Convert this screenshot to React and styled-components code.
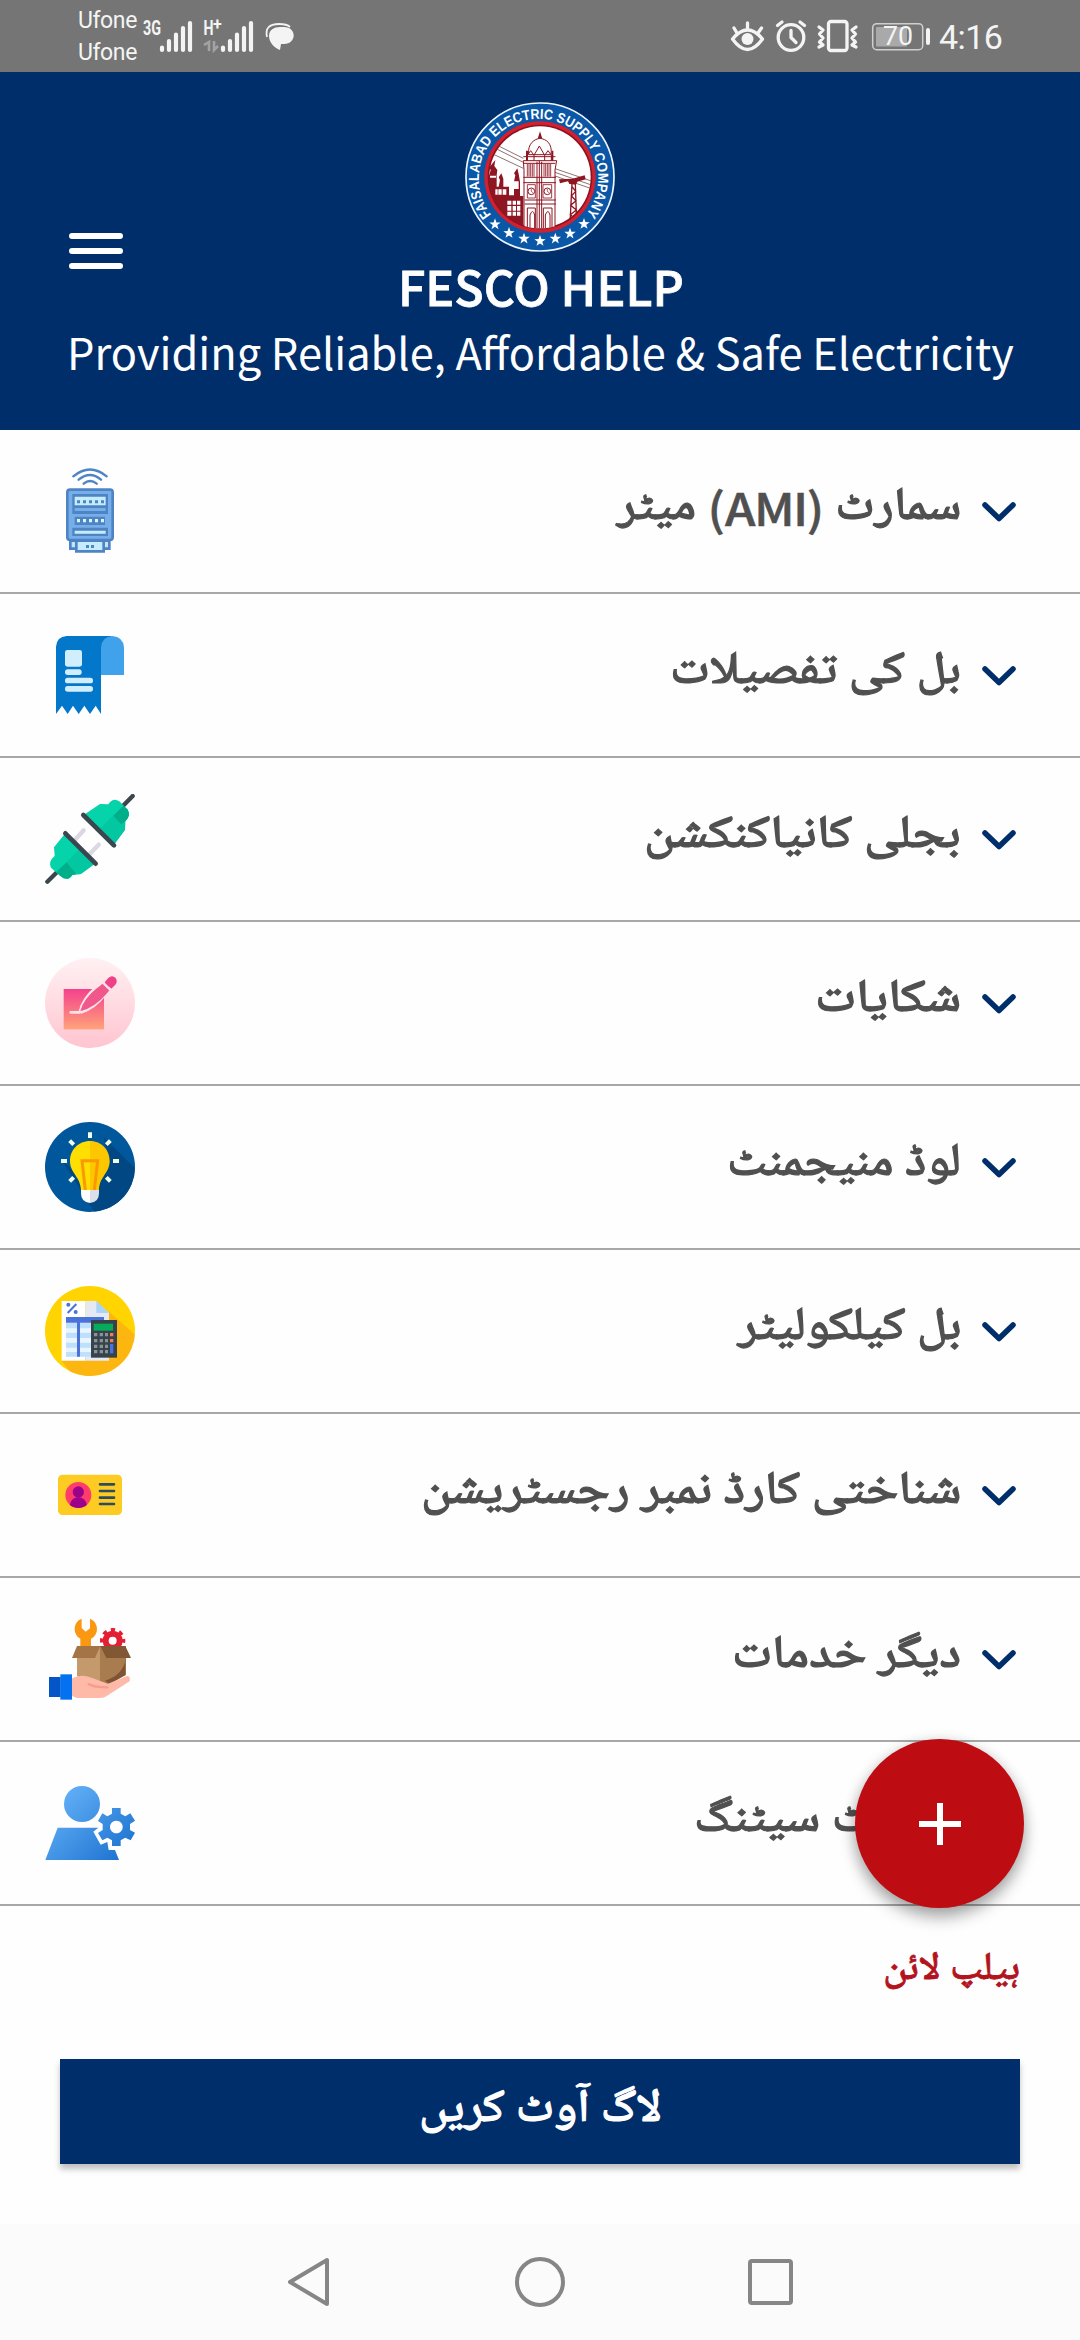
import { useLayoutEffect, useRef, useState } from 'react';
import styled, { createGlobalStyle } from 'styled-components';

const GlobalStyle = createGlobalStyle`
 * {
   box-sizing: border-box;
 }

 body {
   margin: 0;
   background: #fefefe;
   font-family: "Noto Sans CJK SC", "Noto Naskh Arabic", "Noto Sans Arabic", "DejaVu Sans", sans-serif;
 }
`;

const Screen = styled.div`
 position: relative;
 display: flex;
 flex-direction: column;
 width: 1080px;
 height: 2340px;
 overflow: hidden;
 background: #fefefe;
`;

const StatusBar = styled.div`
 display: flex;
 justify-content: space-between;
 height: 72px;
 padding: 0 75px 0 78px;
 background: #757575;
 color: #f4f4f4;
 font-family: Roboto, sans-serif;
`;

const StatusGroup = styled.div`
 display: flex;
 align-items: center;
`;

const Carriers = styled.div`
 width: 64px;
 font-size: 23px;
 line-height: 32px;
 padding-top: 2px;
 letter-spacing: -0.4px;
`;

const Clock = styled.span`
 width: 66px;
 padding-top: 2px;
 font-size: 34px;
 line-height: 40px;
 letter-spacing: -0.6px;
`;

const Header = styled.header`
 display: grid;
 grid-template-columns: 54px 1fr 54px;
 align-content: start;
 height: 358px;
 padding: 30px 69px 0;
 background: #002e6a;
 color: #fff;
`;

const MenuButton = styled.div`
 display: flex;
 flex-direction: column;
 gap: 9px;
 align-self: end;
 margin-bottom: 46px;

 span {
   height: 6px;
   border-radius: 3px;
   background: #fff;
 }
`;

const Brand = styled.div`
 display: flex;
 flex-direction: column;
 align-items: center;
 gap: 3px;

 h1 {
   margin: 0 0 0 2px;
   font-size: 48px;
   font-weight: 500;
   line-height: 60px;
   -webkit-text-stroke: 0.8px currentColor;
 }
`;

const Tagline = styled.p`
 grid-column: 1 / -1;
 display: flex;
 justify-content: center;
 margin: 6px 0 0;
 font-size: 44px;
 line-height: 60px;
`;

const Row = styled.div`
 display: flex;
 align-items: center;
 justify-content: space-between;
 height: 164px;
 padding: 0 63px 0 45px;
 border-bottom: 2px solid #a8a8a8;
`;

const RowEnd = styled.div`
 display: flex;
 align-items: center;
 gap: 20px;
`;

const Label = styled.div`
 direction: rtl;
 color: #505050;
 font-size: 46px;
 font-weight: 500;
 line-height: 60px;
 padding-bottom: 25px;
 -webkit-text-stroke: 1.2px currentColor;
`;

/* Latin abbreviations sit lower than the Urdu baseline */
const Latin = styled.bdi`
 font-size: 45px;
 line-height: 0;
 letter-spacing: -1.4px;
 vertical-align: -7px;
 -webkit-text-stroke: 0.5px currentColor;
`;

const Fitted = styled.span`
 display: inline-block;
 white-space: nowrap;
 transform-origin: ${(props) => props.$origin};
`;

const Helpline = styled.div`
 display: flex;
 direction: rtl;
 height: 153px;
 padding: 31px 60px 0;
 color: #b3131d;
 font-size: 39px;
 font-weight: 500;
 line-height: 50px;
 -webkit-text-stroke: 0.8px currentColor;
`;

const LogoutButton = styled.div`
 display: flex;
 direction: rtl;
 justify-content: center;
 height: 105px;
 margin: 0 60px;
 padding-top: 12px;
 background: #002e6a;
 box-shadow: 0 5px 6px rgba(0, 0, 0, 0.25);
 color: #fff;
 font-size: 46px;
 font-weight: 500;
 line-height: 60px;
 -webkit-text-stroke: 1.2px currentColor;
`;

const Fab = styled.div`
 position: absolute;
 left: 855px;
 top: 1739px;
 display: flex;
 align-items: center;
 justify-content: center;
 width: 169px;
 height: 169px;
 border-radius: 50%;
 background: #be0d12;
 box-shadow: 0 10px 16px rgba(0, 0, 0, 0.28), 0 2px 14px rgba(0, 0, 0, 0.16);
`;

const NavBar = styled.div`
 display: flex;
 justify-content: center;
 gap: 180px;
 height: 116px;
 margin-top: auto;
 padding-top: 32px;
 background: #fbfbfb;
`;

// Squeezes or widens a line of text so that it takes exactly `width` pixels.
const FitText = ({ width, origin = 'right center', children }) => {
  const ref = useRef(null);
  const [scale, setScale] = useState(1);

  useLayoutEffect(() => {
    setScale(width / ref.current.offsetWidth);
  }, [width]);

  return (
    <Fitted ref={ref} $origin={origin} style={{ transform: `scaleX(${scale})` }}>
      {children}
    </Fitted>
  );
};

const starPoints = (cx, cy, r) =>
  Array.from({ length: 10 }, (_, i) => {
    const radius = i % 2 ? r * 0.4 : r;
    const angle = (Math.PI / 5) * i - Math.PI / 2;
    return `${cx + radius * Math.cos(angle)},${cy + radius * Math.sin(angle)}`;
  }).join(' ');

const STARS = [[165, 403], [207, 429], [252, 446], [300, 453], [346, 446], [390, 431], [432, 402]];

const Logo = () => (
  <svg width="150" height="150" viewBox="75 36 450 450">
    <defs>
      <path id="ring" d="M154 375 A179 179 0 1 1 426 388" />
      <clipPath id="inner"><circle cx="300" cy="261" r="154" /></clipPath>
    </defs>
    <circle cx="300" cy="261" r="222" fill="#0a57a8" stroke="#eef5fb" strokeWidth="5" />
    <circle cx="300" cy="261" r="167" fill="#d3202f" />
    <circle cx="300" cy="261" r="157" fill="#8d1220" />
    <circle cx="300" cy="261" r="152" fill="#fff" />
    <g clipPath="url(#inner)">
      <g fill="none" stroke="#7b5557" strokeWidth="2.5">
        <path d="M160 160 L250 205 M160 172 L250 217 M150 188 L250 235 M345 236 L460 275 M345 247 L460 287 M345 258 L460 298" />
      </g>
      <path fill="#8e1522" d="M130 256 H148 V256 L152 240 L148 232 L166 210 L163 228 L172 240 L170 256 V290 H176 L180 270 L176 262 L184 250 L190 266 L190 290 H207 V316 H222 V275 L226 256 L222 250 L232 235 L236 252 L240 275 V318 H250 V420 H130 Z" />
      <path fill="#fff" d="M150 257 H168 V263 H150 Z M222 274 H236 V297 H222 Z M175 298 H185 V314 H175 Z M188 298 H199 V314 H188 Z M166 298 H173 V314 H166 Z M202 332 H214 V344 H202 Z M218 332 H228 V344 H218 Z M231 332 H241 V344 H231 Z M202 348 H214 V362 H202 Z M218 348 H228 V362 H218 Z M231 348 H241 V362 H231 Z M202 365 H214 V377 H202 Z M218 365 H228 V377 H218 Z M231 365 H241 V377 H231 Z" />
      <path fill="#fff" stroke="#8e1522" strokeWidth="3" d="M250 212 H350 L345 240 V425 H252 V240 Z" />
      <path fill="#8e1522" d="M293 146 L300 124 L307 146 Z M258 182 H264 V212 H258 Z M334 182 H340 V212 H334 Z" />
      <path fill="#fff" stroke="#8e1522" strokeWidth="3" d="M266 194 C262 160 284 147 300 145 C318 147 338 160 333 194 Z" />
      <path fill="none" stroke="#8e1522" strokeWidth="3" d="M262 212 V196 L272 182 L282 196 L298 168 L314 196 L324 182 L334 196 V212 M282 196 V212 M314 196 V212 M250 200 H346 M250 220 H346 M250 262 H348 M250 278 H348 M254 330 H348 M254 342 H348 M298 212 V420 M291 215 V420 M305 215 V420" />
      <path fill="none" stroke="#8e1522" strokeWidth="2.5" d="M262 222 V260 M267 222 V260 M272 222 V260 M277 222 V260 M282 222 V260 M312 222 V260 M317 222 V260 M322 222 V260 M327 222 V260 M332 222 V260 M262 284 H286 V324 H262 Z M309 284 H335 V324 H309 Z" />
      <path fill="none" stroke="#8e1522" strokeWidth="3" d="M262 420 V354 H286 V420 M310 420 V354 H336 V420 M270 420 V375 Q278 354 284 375 V420 M316 420 V375 Q324 354 330 375 V420" />
      <g fill="#fff" stroke="#8e1522" strokeWidth="3">
        <circle cx="274" cy="304" r="10" />
        <circle cx="322" cy="304" r="10" />
      </g>
      <path fill="none" stroke="#8e1522" strokeWidth="2" d="M274 297 V304 L279 308 M322 297 V304 L327 308" />
      <path fill="#8e1522" d="M357 268 L398 266 L434 256 L437 268 L412 275 L408 284 L388 282 L384 274 L360 280 Z" />
      <path fill="none" stroke="#8e1522" strokeWidth="4" d="M396 280 L390 400 M406 280 L410 400 M396 290 L407 304 L394 318 L408 332 L392 346 L409 360 L391 374 L410 390" />
    </g>
    <text fill="#fff" fontFamily="Liberation Sans Narrow, Liberation Sans, sans-serif" fontSize="43" fontWeight="700" textLength="796" lengthAdjust="spacingAndGlyphs">
      <textPath href="#ring" textLength="796" lengthAdjust="spacingAndGlyphs">FAISALABAD ELECTRIC SUPPLY COMPANY</textPath>
    </text>
    {STARS.map(([x, y]) => (
      <polygon key={x} points={starPoints(x, y, 18)} fill="#fff" />
    ))}
  </svg>
);

const MeterIcon = () => (
  <svg width="90" height="90" viewBox="45 48 270 270">
    <g fill="none" stroke="#4f84c4" strokeWidth="7" strokeLinecap="round">
      <path d="M130 79 Q180 38 230 79 M146 89 Q180 61 213 89 M161 101 Q180 85 200 101" />
    </g>
    <path d="M121 272 H238 V296 H121 Z" fill="#bfe6fb" stroke="#4f84c4" strokeWidth="8" />
    <path d="M139 272 H221 V304 H139 Z" fill="#c4ecfd" stroke="#4f84c4" strokeWidth="8" />
    <rect x="112" y="119" width="136" height="151" rx="8" fill="#76aeea" stroke="#4f84c4" strokeWidth="8" />
    <path fill="#4f84c4" d="M127 132 H234 V192 H127 Z M134 200 H225 V225 H134 Z M127 233 H234 V258 H127 Z M168 285 H177 V294 H168 Z M183 285 H192 V294 H183 Z" />
    <path fill="#c4ecfd" d="M134 140 H227 V166 H134 Z M134 242 H227 V251 H134 Z" />
    <path fill="#76aeea" d="M134 174 H227 V183 H134 Z" />
    <path stroke="#4f84c4" strokeWidth="9" strokeDasharray="9 9" d="M141 155 H222" />
    <path stroke="#d8f4ff" strokeWidth="10" strokeDasharray="9 9" d="M141 212 H222" />
  </svg>
);

const BillIcon = () => (
  <svg width="90" height="90" viewBox="45 540 270 270">
    <path fill="#0377ca" d="M78 590 Q80 560 110 558 H245 L213 600 V792 L197 767 L180 792 L163 767 L146 792 L129 767 L113 792 L96 767 L78 792 Z" />
    <path fill="#41a2ec" d="M213 675 V592 Q216 560 247 558 Q279 560 282 592 V675 Z" />
    <g fill="#d1eefc">
      <rect x="105" y="600" width="51" height="50" rx="7" />
      <rect x="105" y="658" width="50" height="17" rx="8" />
      <rect x="105" y="683" width="84" height="17" rx="8" />
      <rect x="105" y="708" width="84" height="17" rx="8" />
    </g>
  </svg>
);

const PlugIcon = () => (
  <svg width="90" height="90" viewBox="45 42 270 270">
    <g strokeLinecap="round" strokeWidth="13">
      <path stroke="#3b474e" d="M52 305 L85 272 M275 82 L308 48" />
      <path stroke="#dcd8e3" d="M130 185 L161 151 M174 227 L206 194" />
    </g>
    <path fill="#05d3aa" d="M106 160 L72 202 L74 228 Q54 244 63 263 L92 289 Q113 306 127 285 L153 282 L199 248 Z" />
    <path fill="#00b38f" d="M152 204 L110 246 L144 284 L153 282 L199 248 Z" opacity=".35" />
    <path fill="#00ae8a" d="M110 247 L78 277 L92 289 Q113 306 127 285 L140 283 Z" />
    <path fill="#05d3aa" d="M162 104 L210 72 L235 73 Q249 51 268 64 L292 88 Q305 106 286 124 L285 150 L252 194 Z" />
    <path fill="#00b38f" d="M207 149 L250 106 L286 124 L285 150 L252 194 Z" opacity=".35" />
    <path fill="#00ae8a" d="M250 107 L280 77 L292 88 Q305 106 286 124 L274 133 Z" />
    <g stroke="#3b474e" strokeWidth="14" strokeLinecap="round">
      <path d="M106 160 L197 251 M160 105 L252 196" />
    </g>
  </svg>
);

const ComplaintIcon = () => (
  <svg width="90" height="90" viewBox="45 534 270 270">
    <defs>
      <linearGradient id="pinkBg" x1="0" y1="0" x2="0" y2="1">
        <stop offset="0" stopColor="#fff1f3" />
        <stop offset="1" stopColor="#ffc5d0" />
      </linearGradient>
      <linearGradient id="pinkSheet" x1="0" y1="0" x2="0" y2="1">
        <stop offset="0" stopColor="#f4418c" />
        <stop offset="1" stopColor="#ffa279" />
      </linearGradient>
    </defs>
    <circle cx="180" cy="669" r="135" fill="url(#pinkBg)" />
    <rect x="101" y="627" width="121" height="121" fill="url(#pinkSheet)" />
    <path d="M122 697 H149 Q158 656 198 622 L237 597 L248 612 L224 645 Q196 682 155 697" fill="#f2508a" stroke="#ffe3e8" strokeWidth="8" strokeLinejoin="round" strokeLinecap="round" />
    <path d="M151 693 Q160 655 207 620 L219 610 L239 630 L229 642 Q192 685 151 693 Z" fill="#f0588b" />
    <path d="M224 607 L235 594 Q246 583 257 594 Q264 604 256 614 L244 626 Z" fill="#ef4187" />
    <path d="M219 608 L241 630" stroke="#ffe3e8" strokeWidth="7" />
  </svg>
);

const BulbIcon = () => (
  <svg width="90" height="90" viewBox="45 36 270 270">
    <clipPath id="bulbClip"><circle cx="180" cy="171" r="135" /></clipPath>
    <circle cx="180" cy="171" r="135" fill="#01579b" />
    <g clipPath="url(#bulbClip)">
      <path fill="#014784" d="M220 80 L330 190 V310 H195 L98 153 L140 190 L160 262 L240 150 Z" />
    </g>
    <path fill="#ffde02" d="M180 93 C145 93 120 120 120 153 C120 190 152 200 153 240 H180 Z" />
    <path fill="#fdc700" d="M180 93 C215 93 239 120 239 153 C239 190 208 200 207 240 H180 Z" />
    <path fill="none" stroke="#fb9800" strokeWidth="9" d="M166 240 L156 152 H203 L193 240" />
    <path fill="#fff" d="M153 240 H180 V279 Q153 277 153 250 Z" />
    <path fill="#dcdfea" d="M180 240 H207 V250 Q207 277 180 279 Z" />
    <path stroke="#f2ffe8" strokeWidth="12" d="M180 67 V84 M93 153 H111 M249 153 H267 M119 92 L131 104 M241 92 L229 104 M119 214 L131 202 M241 214 L229 202" />
  </svg>
);

const KEYS = [674, 692, 709, 725];

const CalculatorIcon = () => (
  <svg width="90" height="90" viewBox="45 528 270 270">
    <clipPath id="calcClip"><circle cx="180" cy="663" r="135" /></clipPath>
    <circle cx="180" cy="663" r="135" fill="#ffd400" />
    <path clipPath="url(#calcClip)" fill="#fdb510" d="M200 573 L340 695 V810 H140 L95 752 Z" />
    <path fill="#fff" d="M95 573 H166 V752 H95 Z" />
    <path fill="#e4e9f4" d="M166 573 H199 L237 608 V752 H166 Z" />
    <path fill="#a8d4f8" d="M199 573 L237 609 H199 Z" />
    <path fill="#eaf6ff" d="M108 638 H222 V740 H108 Z" />
    <path fill="#bfe0fc" d="M108 638 H222 V655 H108 Z M108 668 H222 V684 H108 Z M108 698 H222 V713 H108 Z M108 726 H222 V740 H108 Z" />
    <path fill="#4a72d8" d="M108 621 H222 V638 H108 Z M141 638 H150 V740 H141 Z" />
    <path stroke="#4a72d8" strokeWidth="6" d="M113 609 L139 582" />
    <circle cx="115" cy="584" r="6" fill="#4a72d8" />
    <circle cx="137" cy="606" r="6" fill="#4a72d8" />
    <rect x="183" y="630" width="78" height="113" fill="#36434b" />
    <rect x="191" y="641" width="58" height="21" fill="#06ac5c" />
    {KEYS.map((y) => (
      <path key={y} stroke="#8a9298" strokeWidth="10" d={`M192 ${y} H202 M209 ${y} H219 M225 ${y} H234`} />
    ))}
    <path stroke="#f47b55" strokeWidth="10" d="M240 674 H250 M240 692 H250" />
    <path stroke="#4a72d8" strokeWidth="10" d="M245 702 V730" />
  </svg>
);

const CardIcon = () => (
  <svg width="90" height="90" viewBox="45 30 270 270">
    <clipPath id="face"><circle cx="145" cy="165" r="39" /></clipPath>
    <rect x="84" y="104" width="192" height="121" rx="14" fill="#fdcb22" />
    <circle cx="145" cy="165" r="39" fill="#fe3d6b" />
    <g fill="#9c018c" clipPath="url(#face)">
      <circle cx="145" cy="156" r="17" />
      <ellipse cx="145" cy="197" rx="26" ry="25" />
    </g>
    <path stroke="#2a4d60" strokeWidth="8" strokeLinecap="round" d="M210 133 H252 M210 153 H252 M210 173 H252 M210 192 H252" />
  </svg>
);

const ServicesIcon = () => (
  <svg width="90" height="90" viewBox="45 522 270 270">
    <path fill="#fb9812" d="M155 536 V564 L167 575 L180 565 V536 C207 547 208 584 183 596 V620 H151 V596 C127 582 129 545 155 536 Z" />
    <g fill="none" stroke="#e31f33" transform="translate(248 602)">
      <circle r="21" strokeWidth="18" />
      <circle r="33" strokeWidth="10" strokeDasharray="13 12.9" strokeDashoffset="6.5" />
    </g>
    <path fill="#a0713f" d="M141 618 H288 V705 L230 735 L141 708 Z" />
    <path fill="#c49a6c" d="M141 654 L211 618 V724 L141 708 Z" />
    <path fill="#a97c50" d="M211 618 L285 654 V700 L240 732 L211 724 Z" />
    <path fill="#7d5536" d="M285 665 Q275 706 225 722 L240 733 L285 705 Z" />
    <path fill="#a57446" d="M141 618 H211 L195 654 H126 Z" />
    <path fill="#825733" d="M211 618 H286 L303 654 H229 Z" />
    <path fill="#ffb9a9" d="M126 715 Q154 700 184 713 L234 731 L291 708 Q302 708 299 724 L230 768 Q222 774 212 774 H142 L126 768 Z" />
    <path fill="none" stroke="#f89c8b" strokeWidth="7" strokeLinecap="round" d="M176 732 Q190 742 232 742" />
    <path fill="#0455c5" d="M57 711 H92 V771 H57 Z" />
    <path fill="#0371f0" d="M91 703 H126 V779 H91 Z" />
  </svg>
);

const AccountIcon = () => (
  <svg width="90" height="90" viewBox="45 1014 270 270">
    <defs>
      <linearGradient id="blue" gradientUnits="userSpaceOnUse" x1="100" y1="1050" x2="290" y2="1250">
        <stop offset="0" stopColor="#63b0f7" />
        <stop offset="1" stopColor="#1c72d0" />
      </linearGradient>
    </defs>
    <g fill="url(#blue)">
      <circle cx="156" cy="1092" r="54" />
      <path d="M83 1163 H205 L190 1175 L212 1214 L232 1206 L236 1230 H255 L267 1260 H46 Z" />
      <path fillRule="evenodd" d="M246 1104 H272 V1121 L286 1129 L301 1120 L315 1142 L300 1152 V1170 L315 1178 L302 1201 L286 1193 L272 1201 V1218 H246 V1201 L232 1193 L217 1201 L204 1179 L218 1170 V1152 L204 1143 L217 1120 L232 1129 L246 1121 Z M259 1142 A19 19 0 1 0 259.1 1142 Z" />
    </g>
  </svg>
);

const Chevron = () => (
  <svg width="36" height="26" viewBox="0 0 36 26">
    <path d="M4 7 L18 20.5 L32 7" fill="none" stroke="#002e6a" strokeWidth="5.5" strokeLinecap="round" strokeLinejoin="round" />
  </svg>
);

const MENU = [
  { label: <>سمارٹ <Latin>(AMI)</Latin> میٹر</>, width: 344, Icon: MeterIcon },
  { label: 'بل کی تفصیلات', width: 291, Icon: BillIcon },
  { label: 'بجلی کانیاکنکشن', width: 317, Icon: PlugIcon },
  { label: 'شکایات', width: 146, Icon: ComplaintIcon },
  { label: 'لوڈ منیجمنٹ', width: 234, Icon: BulbIcon },
  { label: 'بل کیلکولیٹر', width: 223, Icon: CalculatorIcon },
  { label: 'شناختی کارڈ نمبر رجسٹریشن', width: 540, Icon: CardIcon },
  { label: 'دیگر خدمات', width: 229, Icon: ServicesIcon },
  { label: 'اکاؤنٹ سیٹنگ', width: 267, Icon: AccountIcon },
];

const SignalIcons = () => (
  <svg width="160" height="72" viewBox="142 0 160 72">
    <g fill="#f4f4f4" fontFamily="Roboto, sans-serif" fontWeight="700" fontSize="20">
      <text x="143" y="34.5" textLength="18" lengthAdjust="spacingAndGlyphs">3G</text>
      <text x="203.5" y="34.5" textLength="10" lengthAdjust="spacingAndGlyphs">H</text>
      <text x="213" y="29.5" fontSize="16">+</text>
    </g>
    <g stroke="#f4f4f4" strokeWidth="4.2" strokeLinecap="round">
      <path d="M162 47.5 V50 M169 41 V50 M176 34.5 V50 M183 28 V50 M190 23 V50" />
      <path d="M223 47.5 V50 M230 41 V50 M237 34.5 V50 M244 28 V50 M251 23 V50" />
    </g>
    <path d="M204 45 L209 42 V51 M214 41 V50 L218 46" fill="none" stroke="#a3a3a3" strokeWidth="2.6" />
    <path d="M267 37 Q264 24 279 24 Q287 24 290 27" fill="none" stroke="#f4f4f4" strokeWidth="1.8" />
    <path fill="#f4f4f4" d="M280 27 H284 C297 27 297 44 284 44 H281 L280 50 C274 48 269 42 269 36 C269 30 274 27 280 27 Z" />
  </svg>
);

const SystemIcons = () => (
  <svg width="209" height="72" viewBox="729 0 209 72">
    <g fill="none" stroke="#f4f4f4" strokeWidth="3.3" strokeLinecap="round" strokeLinejoin="round">
      <path d="M731.5 39 Q746.5 21 761.5 39 Q746.5 60 731.5 39 Z M733 28 L736 33 M746.5 23 V29 M760.5 28 L757 33" />
      <circle cx="790" cy="37.5" r="12.8" />
      <path d="M790 30.5 V37.5 L795 42.5 M776.5 25.5 L781 22 M803.5 25.5 L799 22" />
      <rect x="827.5" y="21.5" width="18.5" height="29" rx="2.5" />
      <path d="M818 27 L822 30 L818.5 34 L822 38 L818.5 42 L822 45 L818 47 M855 27 L851 30 L854.5 34 L851 38 L854.5 42 L851 45 L855 47" />
    </g>
    <circle cx="746.5" cy="39" r="6" fill="#f4f4f4" />
    <rect x="871.7" y="23.7" width="50" height="26" rx="4" fill="none" stroke="#cfcfcf" strokeWidth="1.5" />
    <rect x="875" y="27" width="31" height="19.5" rx="1" fill="#a9a9a9" />
    <rect x="925" y="28" width="4" height="17" rx="2" fill="#f4f4f4" />
    <text x="882" y="45" fill="#f4f4f4" fontFamily="Roboto, sans-serif" fontSize="26" textLength="30" lengthAdjust="spacingAndGlyphs">70</text>
  </svg>
);

const App = () => {
  return (
    <Screen>
      <GlobalStyle />
      <StatusBar>
        <StatusGroup>
          <Carriers>Ufone<br />Ufone</Carriers>
          <SignalIcons />
        </StatusGroup>
        <StatusGroup>
          <SystemIcons />
          <Clock>4:16</Clock>
        </StatusGroup>
      </StatusBar>

      <Header>
        <MenuButton>
          <span />
          <span />
          <span />
        </MenuButton>
        <Brand>
          <Logo />
          <h1><FitText width={286} origin="center">FESCO HELP</FitText></h1>
        </Brand>
        <Tagline><FitText width={947} origin="center">Providing Reliable, Affordable &amp; Safe Electricity</FitText></Tagline>
      </Header>

      {MENU.map(({ label, width, Icon }) => (
        <Row key={width}>
          <Icon />
          <RowEnd>
            <Label><FitText width={width}>{label}</FitText></Label>
            <Chevron />
          </RowEnd>
        </Row>
      ))}

      <Helpline><FitText width={137}>ہیلپ لائن</FitText></Helpline>
      <LogoutButton><FitText width={243} origin="center">لاگ آوٹ کریں</FitText></LogoutButton>

      <NavBar>
        <svg width="50" height="52" viewBox="0 0 50 52">
          <path d="M43 4 V48 L6 26 Z" fill="none" stroke="#868686" strokeWidth="4" strokeLinejoin="round" />
        </svg>
        <svg width="52" height="52" viewBox="0 0 52 52">
          <circle cx="26" cy="26" r="23" fill="none" stroke="#868686" strokeWidth="4" />
        </svg>
        <svg width="50" height="52" viewBox="0 0 50 52">
          <rect x="4" y="5" width="41" height="42" rx="2" fill="none" stroke="#868686" strokeWidth="4" />
        </svg>
      </NavBar>

      <Fab>
        <svg width="42" height="42" viewBox="0 0 42 42">
          <path d="M21 0 V42 M0 21 H42" stroke="#fff" strokeWidth="6" />
        </svg>
      </Fab>
    </Screen>
  );
};

export default App;
